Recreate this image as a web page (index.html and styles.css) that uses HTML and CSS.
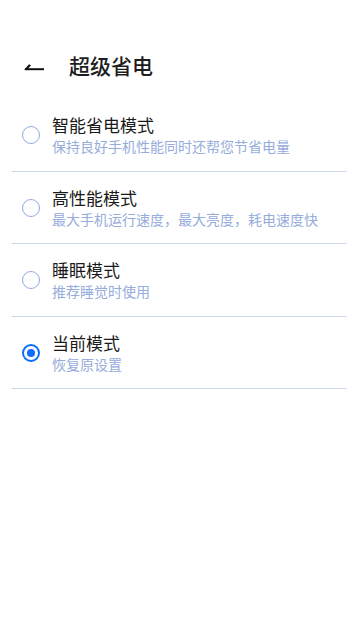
FILE: index.html
```html
<!DOCTYPE html>
<html lang="zh-CN">
<head>
<meta charset="utf-8">
<meta name="viewport" content="width=device-width, initial-scale=1">
<title>超级省电</title>
<link rel="stylesheet" href="styles.css">
</head>
<body>
<div class="page">
  <header class="header">
    <span class="back">
      <svg width="22" height="10" viewBox="0 0 22 10">
        <path d="M2 8.2 L21 8.2" stroke="#111" stroke-width="2" fill="none"/>
        <path d="M1 9 L6 3.2 L8 4.4 L4.4 8.2 Z" fill="#111"/>
      </svg>
    </span>
    <h1 class="title">超级省电</h1>
  </header>
  <ul class="list">
    <li class="item">
      <span class="radio"></span>
      <div class="text">
        <div class="name">智能省电模式</div>
        <div class="desc">保持良好手机性能同时还帮您节省电量</div>
      </div>
    </li>
    <li class="item">
      <span class="radio"></span>
      <div class="text">
        <div class="name">高性能模式</div>
        <div class="desc">最大手机运行速度，最大亮度，耗电速度快</div>
      </div>
    </li>
    <li class="item">
      <span class="radio"></span>
      <div class="text">
        <div class="name">睡眠模式</div>
        <div class="desc">推荐睡觉时使用</div>
      </div>
    </li>
    <li class="item">
      <span class="radio checked"></span>
      <div class="text">
        <div class="name">当前模式</div>
        <div class="desc">恢复原设置</div>
      </div>
    </li>
  </ul>
</div>
</body>
</html>
```

FILE: styles.css
```css
* { box-sizing: border-box; }
html, body { margin: 0; padding: 0; background: #ffffff; }
body {
  font-family: "Noto Sans CJK SC", "Noto Sans", sans-serif;
  color: #1f1f1f;
}
.page { width: 359px; min-height: 638px; }
.header {
  display: flex;
  align-items: center;
  height: 99px;
  padding: 43px 0 12px 23px;
}
.back {
  display: flex;
  align-items: center;
  width: 46px;
  height: 44px;
  padding-top: 1px;
}
.back svg { display: block; }
.title {
  margin: 0;
  font-size: 21px;
  font-weight: 500;
  line-height: 44px;
  color: #1e1e1e;
}
.list {
  list-style: none;
  margin: 0 12px;
  padding: 0;
}
.item {
  display: flex;
  align-items: center;
  gap: 12px;
  padding: 15px 0 14px 10px;
  border-bottom: 1px solid #cdd7ec;
  height: 72.5px;
}
.radio {
  flex: none;
  width: 18px;
  height: 18px;
  border-radius: 50%;
  border: 1.5px solid #93abdf;
  background: #fff;
}
.radio.checked {
  border: 2.6px solid #0d6efd;
  display: flex;
  align-items: center;
  justify-content: center;
}
.radio.checked::after {
  content: "";
  width: 8px;
  height: 8px;
  border-radius: 50%;
  background: #0d6efd;
}
.text { display: flex; flex-direction: column; }
.name {
  font-size: 17px;
  line-height: 22px;
  color: #1a1a1a;
}
.desc {
  font-size: 14px;
  line-height: 20px;
  color: #96acdb;
}
```
